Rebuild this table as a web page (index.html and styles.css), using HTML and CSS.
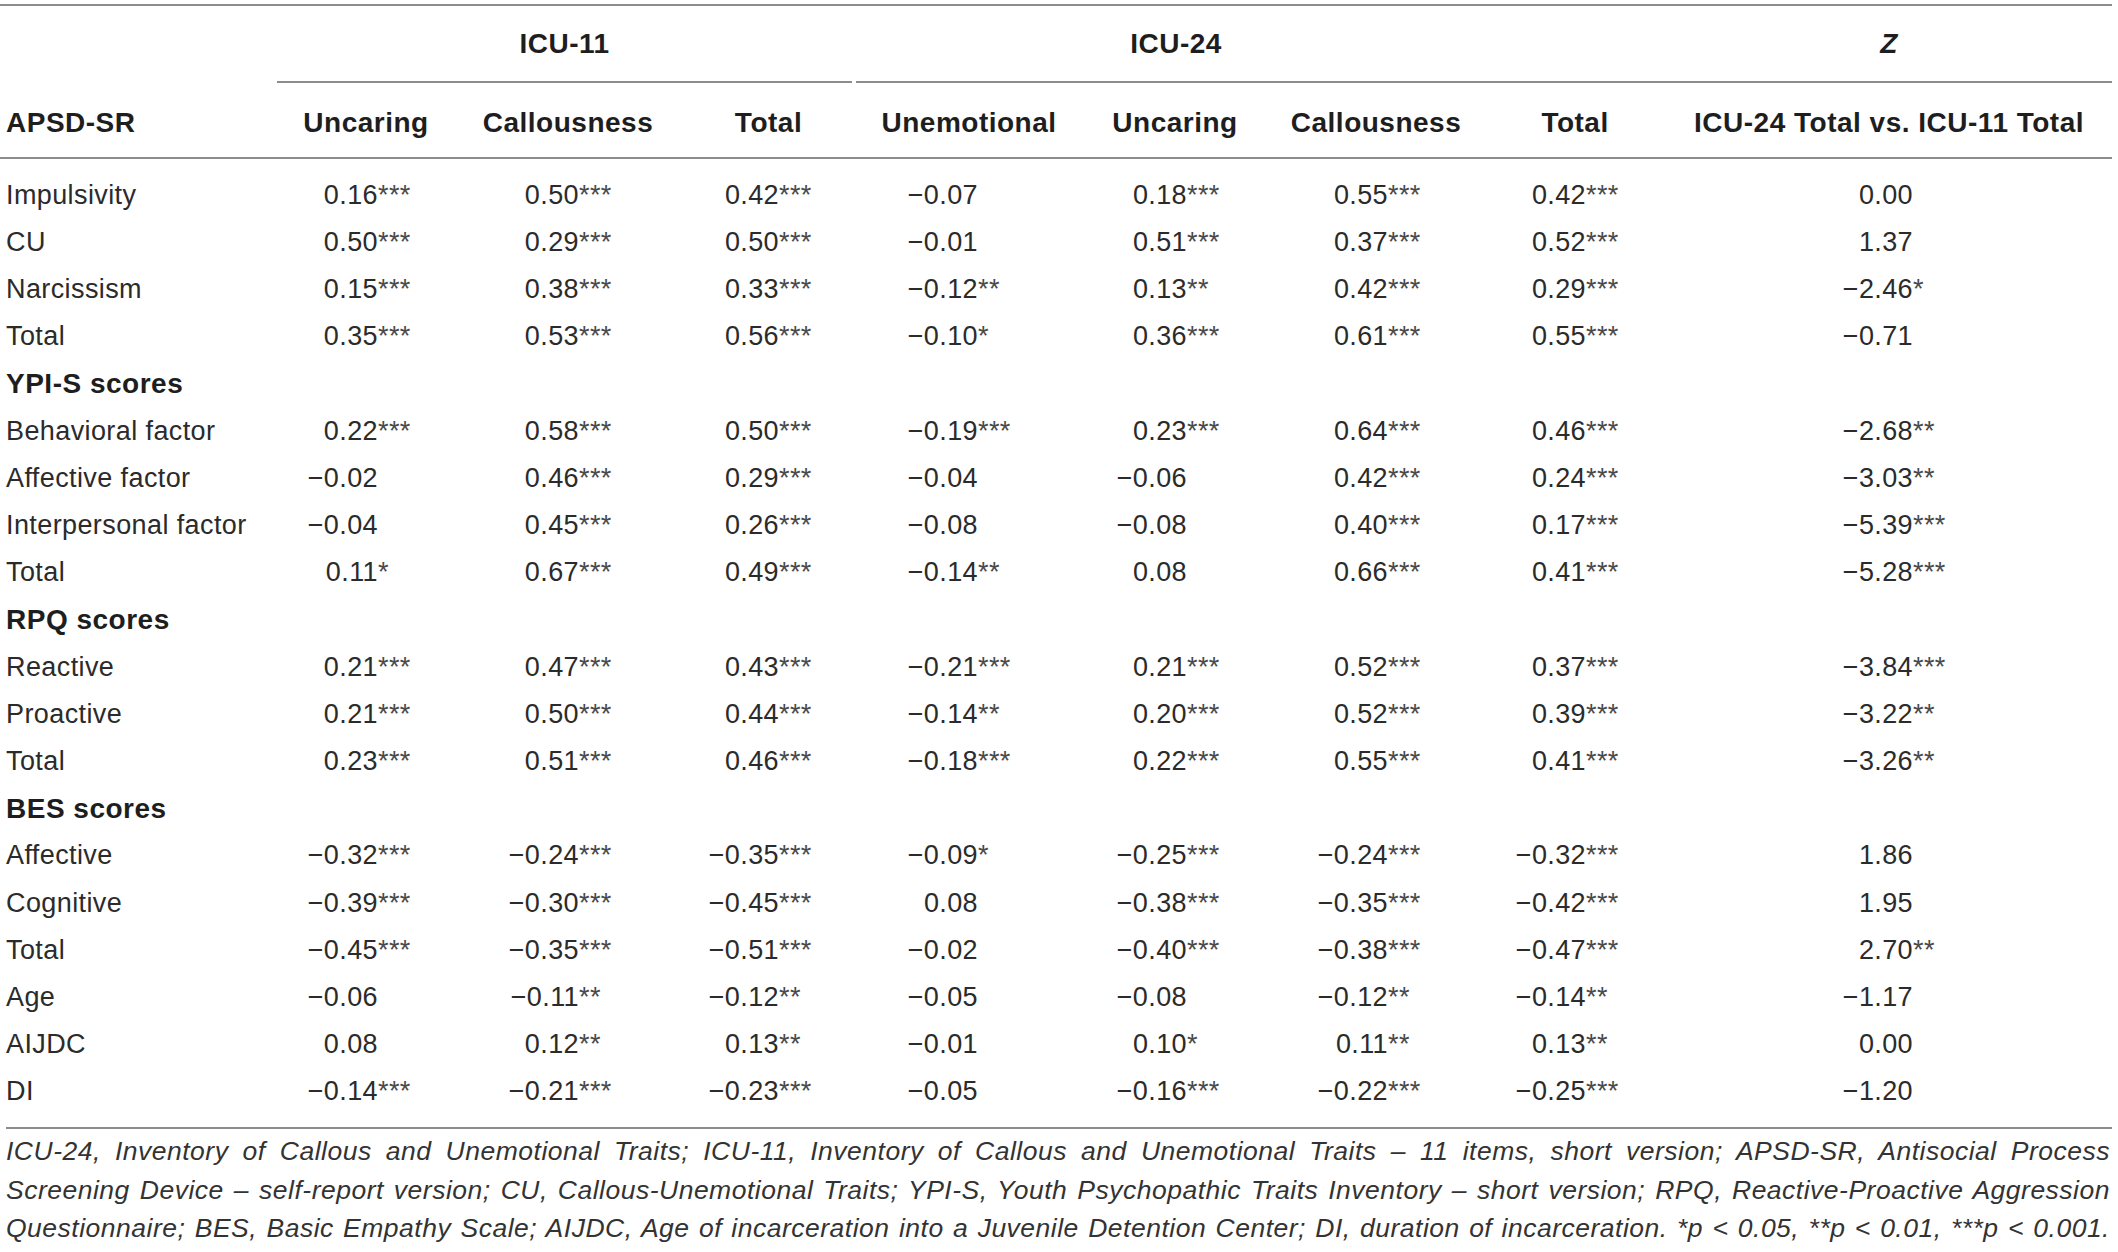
FILE: index.html
```html
<!DOCTYPE html>
<html lang="en">
<head>
<meta charset="UTF-8">
<meta name="viewport" content="width=device-width, initial-scale=1.0">
<title>ICU-11 and ICU-24 correlations</title>
<link rel="stylesheet" href="styles.css">
</head>
<body>
<div class="page">
    <table class="corr">
        <colgroup>
            <col class="w-label">
            <col class="w-c1">
            <col class="w-c2">
            <col class="w-c3">
            <col class="w-c4">
            <col class="w-c5">
            <col class="w-c6">
            <col class="w-c7">
            <col class="w-z">
        </colgroup>
        <thead>
            <tr class="spanners">
                <th></th>
                <th colspan="3"><div class="spanner spanner-11">ICU-11</div></th>
                <th colspan="4"><div class="spanner spanner-24">ICU-24</div></th>
                <th><div class="spanner"><em>Z</em></div></th>
            </tr>
            <tr class="heads">
                <th class="label">APSD-SR</th>
                <th>Uncaring</th>
                <th>Callousness</th>
                <th>Total</th>
                <th>Unemotional</th>
                <th>Uncaring</th>
                <th>Callousness</th>
                <th>Total</th>
                <th>ICU-24 Total vs. ICU-11 Total</th>
            </tr>
        </thead>
        <tbody>
            <tr>
                <td>Impulsivity</td>
                <td><span>0.16</span><span class="s">***</span></td>
                <td><span>0.50</span><span class="s">***</span></td>
                <td><span>0.42</span><span class="s">***</span></td>
                <td><span>−0.07</span><span class="s"></span></td>
                <td><span>0.18</span><span class="s">***</span></td>
                <td><span>0.55</span><span class="s">***</span></td>
                <td><span>0.42</span><span class="s">***</span></td>
                <td><span>0.00</span><span class="s"></span></td>
            </tr>
            <tr>
                <td>CU</td>
                <td><span>0.50</span><span class="s">***</span></td>
                <td><span>0.29</span><span class="s">***</span></td>
                <td><span>0.50</span><span class="s">***</span></td>
                <td><span>−0.01</span><span class="s"></span></td>
                <td><span>0.51</span><span class="s">***</span></td>
                <td><span>0.37</span><span class="s">***</span></td>
                <td><span>0.52</span><span class="s">***</span></td>
                <td><span>1.37</span><span class="s"></span></td>
            </tr>
            <tr>
                <td>Narcissism</td>
                <td><span>0.15</span><span class="s">***</span></td>
                <td><span>0.38</span><span class="s">***</span></td>
                <td><span>0.33</span><span class="s">***</span></td>
                <td><span>−0.12</span><span class="s">**</span></td>
                <td><span>0.13</span><span class="s">**</span></td>
                <td><span>0.42</span><span class="s">***</span></td>
                <td><span>0.29</span><span class="s">***</span></td>
                <td><span>−2.46</span><span class="s">*</span></td>
            </tr>
            <tr>
                <td>Total</td>
                <td><span>0.35</span><span class="s">***</span></td>
                <td><span>0.53</span><span class="s">***</span></td>
                <td><span>0.56</span><span class="s">***</span></td>
                <td><span>−0.10</span><span class="s">*</span></td>
                <td><span>0.36</span><span class="s">***</span></td>
                <td><span>0.61</span><span class="s">***</span></td>
                <td><span>0.55</span><span class="s">***</span></td>
                <td><span>−0.71</span><span class="s"></span></td>
            </tr>
            <tr class="section"><th colspan="9">YPI-S scores</th></tr>
            <tr>
                <td>Behavioral factor</td>
                <td><span>0.22</span><span class="s">***</span></td>
                <td><span>0.58</span><span class="s">***</span></td>
                <td><span>0.50</span><span class="s">***</span></td>
                <td><span>−0.19</span><span class="s">***</span></td>
                <td><span>0.23</span><span class="s">***</span></td>
                <td><span>0.64</span><span class="s">***</span></td>
                <td><span>0.46</span><span class="s">***</span></td>
                <td><span>−2.68</span><span class="s">**</span></td>
            </tr>
            <tr>
                <td>Affective factor</td>
                <td><span>−0.02</span><span class="s"></span></td>
                <td><span>0.46</span><span class="s">***</span></td>
                <td><span>0.29</span><span class="s">***</span></td>
                <td><span>−0.04</span><span class="s"></span></td>
                <td><span>−0.06</span><span class="s"></span></td>
                <td><span>0.42</span><span class="s">***</span></td>
                <td><span>0.24</span><span class="s">***</span></td>
                <td><span>−3.03</span><span class="s">**</span></td>
            </tr>
            <tr>
                <td>Interpersonal factor</td>
                <td><span>−0.04</span><span class="s"></span></td>
                <td><span>0.45</span><span class="s">***</span></td>
                <td><span>0.26</span><span class="s">***</span></td>
                <td><span>−0.08</span><span class="s"></span></td>
                <td><span>−0.08</span><span class="s"></span></td>
                <td><span>0.40</span><span class="s">***</span></td>
                <td><span>0.17</span><span class="s">***</span></td>
                <td><span>−5.39</span><span class="s">***</span></td>
            </tr>
            <tr>
                <td>Total</td>
                <td><span>0.11</span><span class="s">*</span></td>
                <td><span>0.67</span><span class="s">***</span></td>
                <td><span>0.49</span><span class="s">***</span></td>
                <td><span>−0.14</span><span class="s">**</span></td>
                <td><span>0.08</span><span class="s"></span></td>
                <td><span>0.66</span><span class="s">***</span></td>
                <td><span>0.41</span><span class="s">***</span></td>
                <td><span>−5.28</span><span class="s">***</span></td>
            </tr>
            <tr class="section"><th colspan="9">RPQ scores</th></tr>
            <tr>
                <td>Reactive</td>
                <td><span>0.21</span><span class="s">***</span></td>
                <td><span>0.47</span><span class="s">***</span></td>
                <td><span>0.43</span><span class="s">***</span></td>
                <td><span>−0.21</span><span class="s">***</span></td>
                <td><span>0.21</span><span class="s">***</span></td>
                <td><span>0.52</span><span class="s">***</span></td>
                <td><span>0.37</span><span class="s">***</span></td>
                <td><span>−3.84</span><span class="s">***</span></td>
            </tr>
            <tr>
                <td>Proactive</td>
                <td><span>0.21</span><span class="s">***</span></td>
                <td><span>0.50</span><span class="s">***</span></td>
                <td><span>0.44</span><span class="s">***</span></td>
                <td><span>−0.14</span><span class="s">**</span></td>
                <td><span>0.20</span><span class="s">***</span></td>
                <td><span>0.52</span><span class="s">***</span></td>
                <td><span>0.39</span><span class="s">***</span></td>
                <td><span>−3.22</span><span class="s">**</span></td>
            </tr>
            <tr>
                <td>Total</td>
                <td><span>0.23</span><span class="s">***</span></td>
                <td><span>0.51</span><span class="s">***</span></td>
                <td><span>0.46</span><span class="s">***</span></td>
                <td><span>−0.18</span><span class="s">***</span></td>
                <td><span>0.22</span><span class="s">***</span></td>
                <td><span>0.55</span><span class="s">***</span></td>
                <td><span>0.41</span><span class="s">***</span></td>
                <td><span>−3.26</span><span class="s">**</span></td>
            </tr>
            <tr class="section"><th colspan="9">BES scores</th></tr>
            <tr>
                <td>Affective</td>
                <td><span>−0.32</span><span class="s">***</span></td>
                <td><span>−0.24</span><span class="s">***</span></td>
                <td><span>−0.35</span><span class="s">***</span></td>
                <td><span>−0.09</span><span class="s">*</span></td>
                <td><span>−0.25</span><span class="s">***</span></td>
                <td><span>−0.24</span><span class="s">***</span></td>
                <td><span>−0.32</span><span class="s">***</span></td>
                <td><span>1.86</span><span class="s"></span></td>
            </tr>
            <tr>
                <td>Cognitive</td>
                <td><span>−0.39</span><span class="s">***</span></td>
                <td><span>−0.30</span><span class="s">***</span></td>
                <td><span>−0.45</span><span class="s">***</span></td>
                <td><span>0.08</span><span class="s"></span></td>
                <td><span>−0.38</span><span class="s">***</span></td>
                <td><span>−0.35</span><span class="s">***</span></td>
                <td><span>−0.42</span><span class="s">***</span></td>
                <td><span>1.95</span><span class="s"></span></td>
            </tr>
            <tr>
                <td>Total</td>
                <td><span>−0.45</span><span class="s">***</span></td>
                <td><span>−0.35</span><span class="s">***</span></td>
                <td><span>−0.51</span><span class="s">***</span></td>
                <td><span>−0.02</span><span class="s"></span></td>
                <td><span>−0.40</span><span class="s">***</span></td>
                <td><span>−0.38</span><span class="s">***</span></td>
                <td><span>−0.47</span><span class="s">***</span></td>
                <td><span>2.70</span><span class="s">**</span></td>
            </tr>
            <tr>
                <td>Age</td>
                <td><span>−0.06</span><span class="s"></span></td>
                <td><span>−0.11</span><span class="s">**</span></td>
                <td><span>−0.12</span><span class="s">**</span></td>
                <td><span>−0.05</span><span class="s"></span></td>
                <td><span>−0.08</span><span class="s"></span></td>
                <td><span>−0.12</span><span class="s">**</span></td>
                <td><span>−0.14</span><span class="s">**</span></td>
                <td><span>−1.17</span><span class="s"></span></td>
            </tr>
            <tr>
                <td>AIJDC</td>
                <td><span>0.08</span><span class="s"></span></td>
                <td><span>0.12</span><span class="s">**</span></td>
                <td><span>0.13</span><span class="s">**</span></td>
                <td><span>−0.01</span><span class="s"></span></td>
                <td><span>0.10</span><span class="s">*</span></td>
                <td><span>0.11</span><span class="s">**</span></td>
                <td><span>0.13</span><span class="s">**</span></td>
                <td><span>0.00</span><span class="s"></span></td>
            </tr>
            <tr>
                <td>DI</td>
                <td><span>−0.14</span><span class="s">***</span></td>
                <td><span>−0.21</span><span class="s">***</span></td>
                <td><span>−0.23</span><span class="s">***</span></td>
                <td><span>−0.05</span><span class="s"></span></td>
                <td><span>−0.16</span><span class="s">***</span></td>
                <td><span>−0.22</span><span class="s">***</span></td>
                <td><span>−0.25</span><span class="s">***</span></td>
                <td><span>−1.20</span><span class="s"></span></td>
            </tr>
        </tbody>
    </table>

    <p class="note">
        <span class="note-line">ICU-24, Inventory of Callous and Unemotional Traits; ICU-11, Inventory of Callous and Unemotional Traits – 11 items, short version; APSD-SR, Antisocial Process</span>
        <span class="note-line">Screening Device – self-report version; CU, Callous-Unemotional Traits; YPI-S, Youth Psychopathic Traits Inventory – short version; RPQ, Reactive-Proactive Aggression</span>
        <span class="note-line">Questionnaire; BES, Basic Empathy Scale; AIJDC, Age of incarceration into a Juvenile Detention Center; DI, duration of incarceration. *p &lt; 0.05, **p &lt; 0.01, ***p &lt; 0.001.</span>
    </p>
</div>
</body>
</html>
```

FILE: styles.css
```css
body {
    margin: 0;
    background-color: #fff;
    color: #2b2b2b;
    font-family: "Liberation Sans", Arial, sans-serif;
}
.page {
    width: 2112px;
    padding-top: 4px;
}

/* table */
.corr {
    width: 2112px;
    table-layout: fixed;
    border-collapse: separate;
    border-spacing: 0;
    border-top: 2px solid #8c8c8c;
    font-size: 27px;
    letter-spacing: 0.4px;
}
.w-label { width: 277px; }
.w-c1 { width: 178px; }
.w-c2 { width: 226px; }
.w-c3 { width: 175px; }
.w-c4 { width: 226px; }
.w-c5 { width: 186px; }
.w-c6 { width: 216px; }
.w-c7 { width: 182px; }
.w-z { width: 446px; }

th {
    padding: 0;
    font-size: 28px;
    letter-spacing: 0.5px;
    color: #1e1e1e;
    white-space: nowrap;
}
.spanner {
    height: 75px;
    line-height: 75px;
    text-align: center;
    border-bottom: 2px solid #8c8c8c;
}
.spanner-11 {
    margin-right: 4px;
}
.spanner-24 {
    padding-right: 170px;
}
.heads th {
    padding-top: 6px;
    line-height: 68px;
    border-bottom: 2px solid #8c8c8c;
    text-align: center;
}
.heads th.label {
    text-align: left;
    padding-left: 6px;
}

td {
    padding: 0;
    line-height: 47.2px;
    white-space: nowrap;
    text-align: right;
}
td:first-child {
    text-align: left;
    padding-left: 6px;
}
td:nth-child(2) { padding-right: 41px; }
td:nth-child(3) { padding-right: 66px; }
td:nth-child(4) { padding-right: 41px; }
td:nth-child(5) { padding-right: 68px; }
td:nth-child(6) { padding-right: 45px; }
td:nth-child(7) { padding-right: 60px; }
td:nth-child(8) { padding-right: 44px; }
td:nth-child(9) { padding-right: 163px; }

.s {
    display: inline-block;
    width: 36px;
    text-align: left;
    color: #4a4a4a;
}
.section th {
    text-align: left;
    padding-left: 6px;
    line-height: 47.2px;
}
tbody tr:first-child > * {
    padding-top: 12.6px;
}
tbody tr:last-child > * {
    padding-bottom: 11.4px;
}

/* footnote */
.note {
    margin: 0 0 0 6px;
    padding: 3px 2px 0 0;
    border-top: 2px solid #8c8c8c;
    font-style: italic;
    font-size: 26.5px;
    letter-spacing: 0.5px;
    line-height: 38.5px;
    color: #333;
}
.note-line {
    display: block;
    text-align: justify;
    text-align-last: justify;
}
```
